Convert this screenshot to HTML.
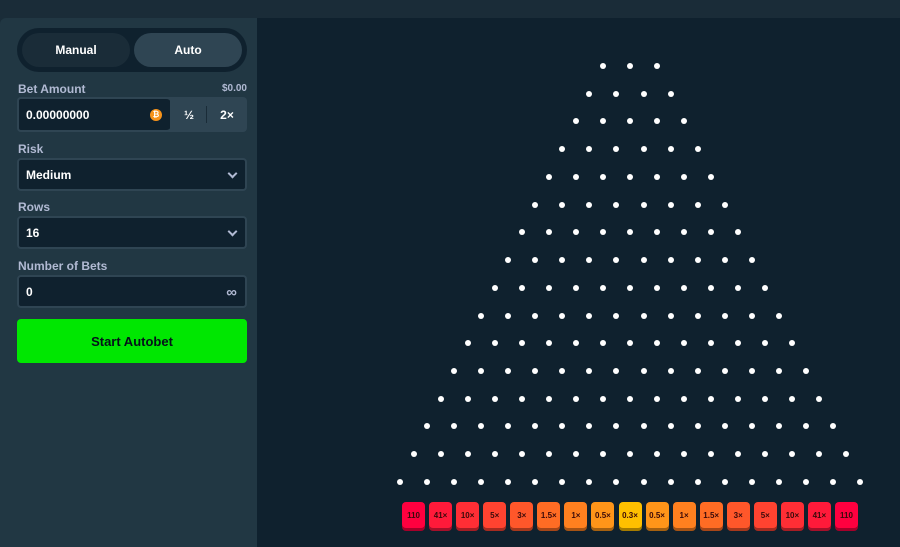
<!DOCTYPE html>
<html><head><style>
*{box-sizing:border-box;margin:0;padding:0}
body{width:900px;height:547px;background:#1a2c38;font-family:"Liberation Sans",sans-serif;position:relative;overflow:hidden}
.top{position:absolute;left:0;top:0;width:900px;height:18px;background:#1a2c38}
.left{position:absolute;left:0;top:18px;width:257px;height:529px;background:#213743;border-top-left-radius:6px}
.main{position:absolute;left:257px;top:18px;width:643px;height:529px;background:#0f212e}
.tabs{position:absolute;left:17px;top:28px;width:230px;height:44px;background:#0f212e;border-radius:22px}
.tab{position:absolute;top:5px;height:34px;border-radius:17px;color:#fff;font-size:12px;font-weight:bold;display:flex;align-items:center;justify-content:center}
.lbl{position:absolute;left:18px;color:#b1bad3;font-size:12px;font-weight:bold}
.inp{position:absolute;left:17px;width:230px;height:33px;background:#0f212e;border:2px solid #2f4553;border-radius:4px;color:#fff;font-size:12px;font-weight:bold;padding-left:7px;display:flex;align-items:center}
.chev{position:absolute;right:9px;top:10px;width:7px;height:7px;border-right:2px solid #b1bad3;border-bottom:2px solid #b1bad3;transform:rotate(45deg)}
.btn{position:absolute;left:17px;top:319px;width:230px;height:44px;background:#00e701;border-radius:4px;color:#05121a;font-size:13px;font-weight:bold;display:flex;align-items:center;justify-content:center}
.peg{position:absolute;width:6px;height:6px;border-radius:50%;background:#fff}
.bk{position:absolute;top:502px;width:23px;height:26px;border-radius:4px;font-size:8px;font-weight:bold;color:#3a0a0a;display:flex;align-items:center;justify-content:center}
</style></head><body>
<div class="top"></div>
<div class="left"></div>
<div class="main"></div>
<div class="tabs">
 <div class="tab" style="left:5px;width:108px;background:#1a2c38">Manual</div>
 <div class="tab" style="left:117px;width:108px;background:#2f4553">Auto</div>
</div>
<div class="lbl" style="top:82px">Bet Amount</div>
<div class="lbl" style="top:83px;left:auto;right:653px;font-size:10px">$0.00</div>
<div style="position:absolute;left:17px;top:97px;width:230px;height:35px;background:#2f4553;border-radius:4px"></div>
<div class="inp" style="top:97px;width:153px;height:35px;border-right:none">0.00000000
 <div style="position:absolute;right:8px;top:10px;width:12px;height:12px;border-radius:50%;background:#f7931a;color:#fff;font-size:8px;text-align:center;line-height:12px">₿</div></div>
<div style="position:absolute;left:170px;top:97px;width:38px;height:35px;color:#fff;font-size:12px;font-weight:bold;display:flex;align-items:center;justify-content:center">½</div>
<div style="position:absolute;left:206px;top:106px;width:1px;height:17px;background:#1a2c38"></div>
<div style="position:absolute;left:208px;top:97px;width:38px;height:35px;color:#fff;font-size:12px;font-weight:bold;display:flex;align-items:center;justify-content:center">2×</div>
<div class="lbl" style="top:142px">Risk</div>
<div class="inp" style="top:158px">Medium<div class="chev"></div></div>
<div class="lbl" style="top:200px">Rows</div>
<div class="inp" style="top:216px">16<div class="chev"></div></div>
<div class="lbl" style="top:259px">Number of Bets</div>
<div class="inp" style="top:275px">0<span style="position:absolute;right:8px;top:7px;color:#b1bad3;font-size:15px">∞</span></div>
<div class="btn">Start Autobet</div>
<div id="b"></div>
<script>
var h='';
for(var r=0;r<16;r++){var n=r+3;var y=66+r*27.73;for(var i=0;i<n;i++){var x=630+(i-(n-1)/2)*27.06;h+='<div class="peg" style="left:'+(x-3)+'px;top:'+(y-3)+'px"></div>';}}
var L=['110','41×','10×','5×','3×','1.5×','1×','0.5×','0.3×','0.5×','1×','1.5×','3×','5×','10×','41×','110'];
var C=['#ff003f','#ff1a3a','#ff2e35','#ff4330','#ff572a','#ff6c24','#ff801f','#ff9519','#ffc000','#ff9519','#ff801f','#ff6c24','#ff572a','#ff4330','#ff2e35','#ff1a3a','#ff003f'];
var S=['#a6002a','#a6102a','#a61d24','#a62b20','#a6381c','#a64618','#a65314','#a66110','#a67c00','#a66110','#a65314','#a64618','#a6381c','#a62b20','#a61d24','#a6102a','#a6002a'];
for(var k=0;k<17;k++){var x=630+(k-8)*27.06;h+='<div class="bk" style="left:'+(x-11.5)+'px;background:'+C[k]+';box-shadow:0 3px 0 '+S[k]+'">'+L[k]+'</div>';}
document.getElementById('b').innerHTML=h;
</script>
</body></html>
